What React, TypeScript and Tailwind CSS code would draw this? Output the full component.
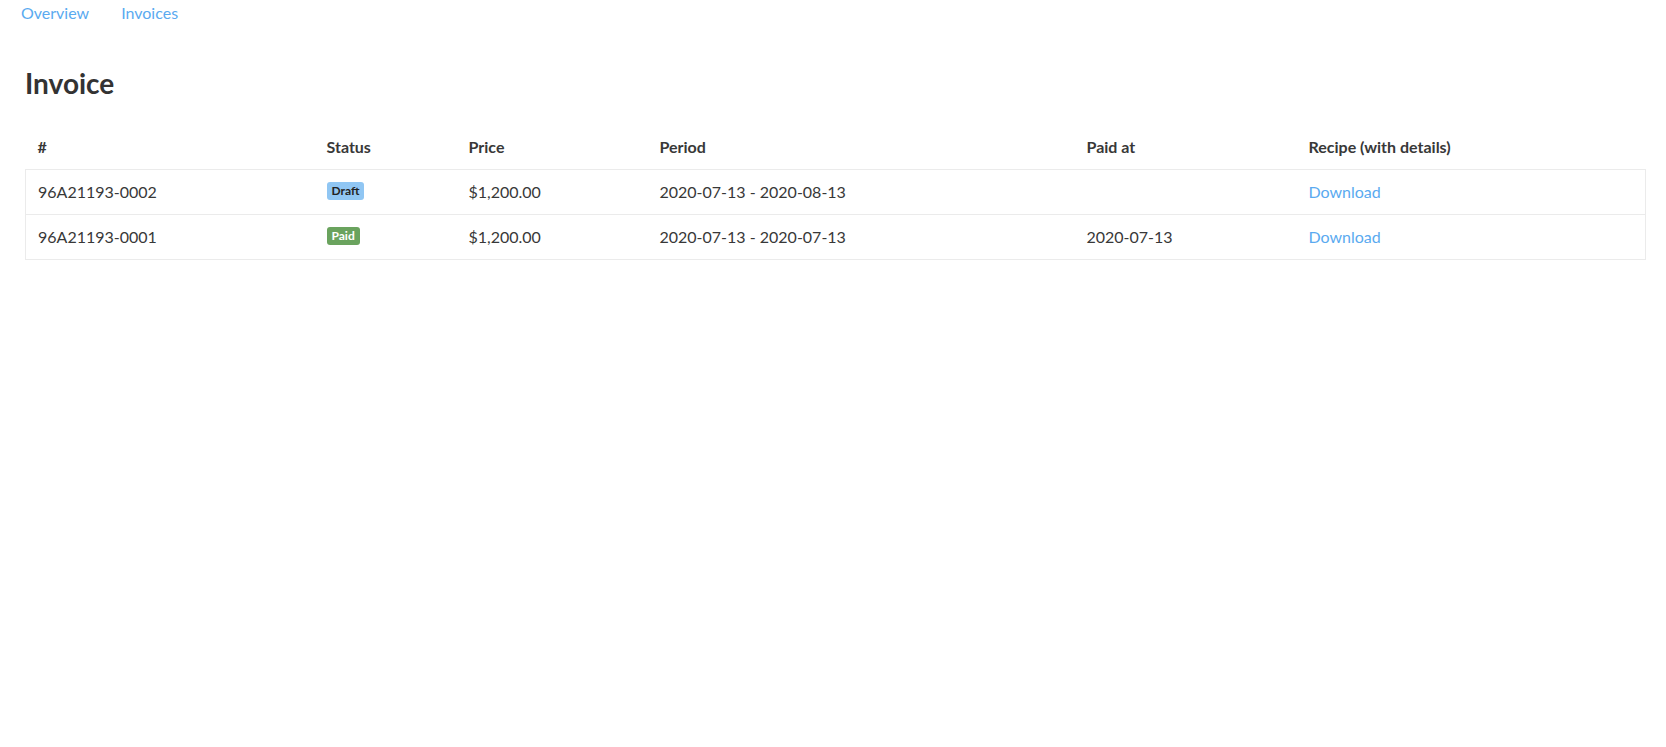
const invoices = [
  { id: '96A21193-0002', status: 'Draft', price: '$1,200.00', period: '2020-07-13 - 2020-08-13', paidAt: '' },
  { id: '96A21193-0001', status: 'Paid', price: '$1,200.00', period: '2020-07-13 - 2020-07-13', paidAt: '2020-07-13' },
];

function StatusBadge({ status }: { status: string }) {
  if (status === 'Paid') {
    return (
      <span className="inline-block align-top mt-[2px] h-[18px] rounded-[3px] bg-[#6aa35e] px-[5px] text-[12px] font-bold leading-[18px] text-white">
        Paid
      </span>
    );
  }
  return (
    <span className="inline-block align-top mt-[2px] h-[18px] rounded-[3px] bg-[#90c6f3] px-[5px] text-[12px] font-bold leading-[18px] text-[#222]">
      Draft
    </span>
  );
}

export default function App() {
  return (
    <div className="min-h-screen bg-white text-[16px] text-[#383838] font-['Lato','Liberation_Sans',sans-serif]">
      <nav className="flex pl-[5px] pt-[1px] h-[28px]">
        <a href="#" className="px-4 leading-6 text-[#5aaaf0]">Overview</a>
        <a href="#" className="px-4 leading-6 text-[#5aaaf0]">Invoices</a>
      </nav>

      <main className="pl-[25px] pr-[20px] pt-[39px]">
        <h1 className="text-[28px] font-bold leading-[1.2] text-[#333] mb-[24px]">Invoice</h1>

        <table className="w-full border-collapse text-left">
          <thead>
            <tr className="leading-6">
              <th className="w-[289px] px-3 py-[10px] font-bold">#</th>
              <th className="w-[142px] px-3 py-[10px] font-bold">Status</th>
              <th className="w-[191px] px-3 py-[10px] font-bold">Price</th>
              <th className="w-[427px] px-3 py-[10px] font-bold">Period</th>
              <th className="w-[222px] px-3 py-[10px] font-bold">Paid at</th>
              <th className="px-3 py-[10px] font-bold">Recipe (with details)</th>
            </tr>
          </thead>
          <tbody className="border border-[#ebebeb]">
            {invoices.map((inv) => (
              <tr key={inv.id} className="border-t border-[#ebebeb] leading-6">
                <td className="px-3 py-[10px]">{inv.id}</td>
                <td className="px-3 py-[10px]">
                  <StatusBadge status={inv.status} />
                </td>
                <td className="px-3 py-[10px]">{inv.price}</td>
                <td className="px-3 py-[10px]">{inv.period}</td>
                <td className="px-3 py-[10px]">{inv.paidAt}</td>
                <td className="px-3 py-[10px]">
                  <a href="#" className="text-[#5aaaf0]">Download</a>
                </td>
              </tr>
            ))}
          </tbody>
        </table>
      </main>
    </div>
  );
}
